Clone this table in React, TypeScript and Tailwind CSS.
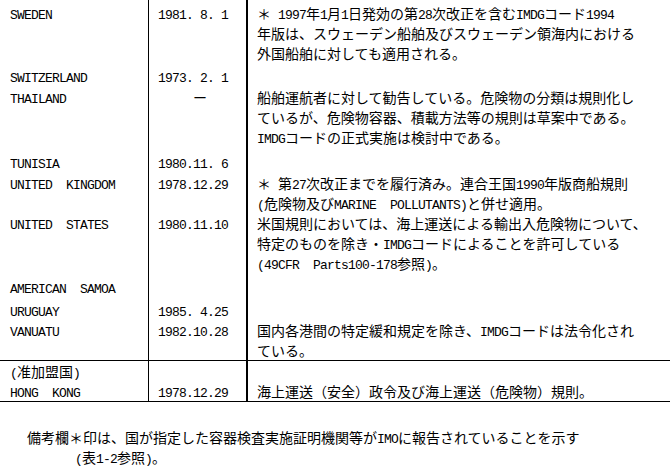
import React from "react";

const Seg = ({ t }: { t: string }) => {
  const parts = t.split(/([\x20-\x7e]+)/).filter((p) => p.length > 0);
  return (
    <>
      {parts.map((p, i) =>
        /^[\x20-\x7e]+$/.test(p) ? (
          <span key={i} className="font-['Liberation_Mono',monospace] text-[13px] tracking-[-0.8px]">
            {p}
          </span>
        ) : (
          <span key={i}>{p}</span>
        )
      )}
    </>
  );
};

type Row = { c1: string; c2: string; lines: string[]; pt: string; border?: string };

const rows: Row[] = [
  {
    c1: "SWEDEN",
    c2: "1981. 8. 1",
    lines: [
      "＊ 1997年1月1日発効の第28次改正を含むIMDGコード1994",
      "年版は、スウェーデン船舶及びスウェーデン領海内における",
      "外国船舶に対しても適用される。",
    ],
    pt: "pt-[3px]",
  },
  { c1: "SWITZERLAND", c2: "1973. 2. 1", lines: [""], pt: "pt-[3px]" },
  {
    c1: "THAILAND",
    c2: "     ー",
    lines: [
      "船舶運航者に対して勧告している。危険物の分類は規則化し",
      "ているが、危険物容器、積載方法等の規則は草案中である。",
      "IMDGコードの正式実施は検討中である。",
    ],
    pt: "pt-[0.5px]",
  },
  { c1: "TUNISIA", c2: "1980.11. 6", lines: [""], pt: "pt-[5px]" },
  {
    c1: "UNITED  KINGDOM",
    c2: "1978.12.29",
    lines: ["＊ 第27次改正までを履行済み。連合王国1990年版商船規則", "(危険物及びMARINE  POLLUTANTS)と併せ適用。"],
    pt: "pt-[1px]",
  },
  {
    c1: "UNITED  STATES",
    c2: "1980.11.10",
    lines: [
      "米国規則においては、海上運送による輸出入危険物について、",
      "特定のものを除き・IMDGコードによることを許可している",
      "(49CFR  Parts100-178参照)。",
    ],
    pt: "pt-[0px]",
  },
  { c1: "AMERICAN  SAMOA", c2: "", lines: [""], pt: "pt-[4.5px]" },
  { c1: "URUGUAY", c2: "1985. 4.25", lines: [""], pt: "pt-[2.5px]" },
  {
    c1: "VANUATU",
    c2: "1982.10.28",
    lines: ["国内各港間の特定緩和規定を除き、IMDGコードは法令化され", "ている。"],
    pt: "pt-[0px] pb-[0.5px]",
    border: "border-b border-black",
  },
  { c1: "(准加盟国)", c2: "", lines: [""], pt: "pt-[0px]" },
  {
    c1: "HONG  KONG",
    c2: "1978.12.29",
    lines: ["海上運送（安全）政令及び海上運送（危険物）規則。"],
    pt: "pt-[0px]",
    border: "border-b border-black",
  },
];

export default function App() {
  return (
    <div className="w-[670px] h-[467px] bg-white text-black font-['Noto_Sans_CJK_JP',sans-serif] text-[14px] leading-[20px] overflow-hidden">
      <div className="w-[670px]">
        {rows.map((r, i) => (
          <div key={i} className={"flex " + (r.border ?? "")}>
            <div className={"w-[149px] shrink-0 border-r border-black pl-[10px] whitespace-pre " + r.pt}>
              <div className="h-[20px]">
                <Seg t={r.c1} />
              </div>
            </div>
            <div className={"w-[99px] shrink-0 border-r-2 border-black pl-[9px] whitespace-pre " + r.pt}>
              <div className="h-[20px]">
                <Seg t={r.c2} />
              </div>
            </div>
            <div className={"flex-1 pl-[9px] whitespace-pre " + r.pt}>
              {r.lines.map((l, j) => (
                <div key={j} className="h-[20px]">
                  <Seg t={l} />
                </div>
              ))}
            </div>
          </div>
        ))}
      </div>
      <div className="mt-[25px] whitespace-pre">
        <div className="h-[20px] pl-[27px]">
          <Seg t="備考欄＊印は、国が指定した容器検査実施証明機関等がIMOに報告されていることを示す" />
        </div>
        <div className="h-[20px] pl-[75px]">
          <Seg t="(表1-2参照)。" />
        </div>
      </div>
    </div>
  );
}
